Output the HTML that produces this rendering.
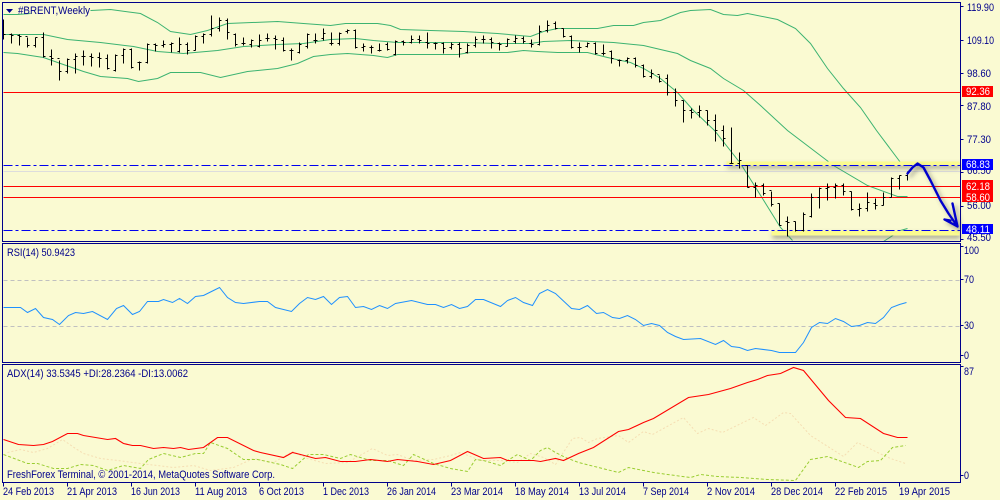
<!DOCTYPE html>
<html><head><meta charset="utf-8"><title>#BRENT,Weekly</title>
<style>
html,body{margin:0;padding:0;background:#FAFAD2;width:1000px;height:500px;overflow:hidden}
svg{display:block}
text{font-family:"Liberation Sans",sans-serif;font-size:11px;fill:#00008B}
.w{fill:#fff}
</style></head><body>
<svg width="1000" height="500" viewBox="0 0 1000 500" xmlns="http://www.w3.org/2000/svg">
<defs>
<filter id="s1" x="-5%" y="-200%" width="110%" height="800%"><feDropShadow dx="1" dy="3" stdDeviation="2.5" flood-color="#555" flood-opacity=".5"/></filter>
<filter id="s2" x="-30%" y="-30%" width="160%" height="160%"><feDropShadow dx="3" dy="3" stdDeviation="2" flood-color="#444" flood-opacity=".5"/></filter>
</defs>
<rect width="1000" height="500" fill="#FAFAD2"/>
<g transform="translate(.5 .5)" fill="none">
<path d="M3 171H960" stroke="#ddd"/>
<g stroke="#3CB371" shape-rendering="auto">
<path d="M3 14L17 14L30 13M90 10L110 9L140 13L157 22L170 31L190 34L207 30L227 23L277 21L303 23L330 25L345 23L377 23L390 25L400 29L430 30L463 31L497 33L530 36L543 31L557 28L597 28L613 25L633 25L643 22L660 20L680 12L690 10L710 9L723 14L737 15L747 13L777 19L795 28L810 43L827 68L843 88L860 107L876 130L900 162L907 164"/>
<path d="M3 34L43 34L67 39L100 42L133 46L157 51L183 53L217 50L243 46L277 44L303 43L330 39L355 38L373 40L397 42L463 42L497 43L530 43L543 41L570 40L613 42L643 45L660 49L677 53L690 60L710 68L723 78L743 90L760 105L787 130L833 165L867 185L897 196L907 196"/>
<path d="M3 52L17 53L43 57L60 63L83 71L100 76L127 78L138 81L157 78L170 72L200 72L220 77L247 71L277 68L297 63L313 56L330 54L347 53L373 55L387 57L397 54L457 54L470 52L507 52L523 50L537 51L557 52L587 52L607 57L630 62L643 68L660 78L677 92L693 110L714 130L740 163L757 190L780 227L792 240M883 241L900 230L907 228"/>
</g>
<rect x="726" y="161" width="233" height="4" fill="#FBFB90" stroke="none" filter="url(#s1)"/>
<rect x="771" y="230" width="188" height="5" fill="#FBFB90" stroke="none" filter="url(#s1)"/>
<path d="M3 92H960M3 186H960M3 197H960" stroke="#f00"/>
<path d="M3 165H960M3 230H960" stroke="#0000F0" stroke-dasharray="9 3 3 3"/>
<path shape-rendering="crispEdges" stroke="#000" d="M3 19V39M3 34h2M9 34h2M11 33V43M11 35h2M17 35h2M19 34V45M19 36h2M25 36h2M27 37V47M27 45h2M33 45h2M35 37V47M35 37h2M41 37h2M43 32V57M43 56h2M49 56h2M51 49V65M51 58h2M57 58h2M59 60V80M59 71h2M65 71h2M67 58V73M67 59h2M73 59h2M75 53V73M75 56h2M81 56h2M83 50V65M83 56h2M89 56h2M91 53V66M91 57h2M97 57h2M99 52V67M99 58h2M105 58h2M107 54V69M107 68h2M113 70h2M115 54V71M115 55h2M121 55h2M123 48V63M123 49h2M129 49h2M131 48V68M131 67h2M137 62h2M139 61V70M139 62h2M145 62h2M147 43V63M147 44h2M153 44h2M155 43V51M155 45h2M161 45h2M163 40V47M163 44h2M169 44h2M171 42V52M171 43h2M177 51h2M179 37V52M179 44h2M185 44h2M187 42V54M187 50h2M193 50h2M195 35V50M195 36h2M201 36h2M203 33V43M203 34h2M209 34h2M211 15V36M211 28h2M217 28h2M219 17V31M219 20h2M225 20h2M227 18V39M227 32h2M233 34h2M235 33V46M235 44h2M241 43h2M243 37V45M243 43h2M249 44h2M251 39V47M251 40h2M257 46h2M259 34V47M259 40h2M265 38h2M267 33V41M267 38h2M273 38h2M275 35V49M275 39h2M281 40h2M283 37V51M283 50h2M289 50h2M291 48V60M291 50h2M297 52h2M299 42V53M299 44h2M305 46h2M307 33V48M307 34h2M313 40h2M315 33V43M315 40h2M321 38h2M323 28V40M323 33h2M329 43h2M331 32V45M331 43h2M337 43h2M339 32V45M339 33h2M345 31h2M347 29V33M347 30h2M353 30h2M355 29V48M355 47h2M361 47h2M363 43V51M363 46h2M369 47h2M371 45V53M371 47h2M377 50h2M379 43V51M379 50h2M385 44h2M387 42V50M387 49h2M393 54h2M395 40V55M395 41h2M401 41h2M403 40V45M403 42h2M409 42h2M411 35V43M411 39h2M417 39h2M419 35V43M419 40h2M425 42h2M427 32V48M427 43h2M433 43h2M435 42V49M435 43h2M441 43h2M443 42V53M443 48h2M449 47h2M451 42V49M451 44h2M457 44h2M459 42V57M459 48h2M465 52h2M467 43V53M467 45h2M473 45h2M475 36V47M475 39h2M481 39h2M483 35V43M483 39h2M489 39h2M491 37V48M491 42h2M497 43h2M499 42V50M499 44h2M505 46h2M507 38V46M507 39h2M513 41h2M515 35V43M515 38h2M521 38h2M523 36V43M523 41h2M529 43h2M531 39V47M531 44h2M537 44h2M539 25V45M539 31h2M545 30h2M547 20V32M547 25h2M553 23h2M555 21V29M555 28h2M561 28h2M563 28V37M563 36h2M569 36h2M571 35V48M571 47h2M577 47h2M579 42V52M579 47h2M585 46h2M587 42V47M587 43h2M593 43h2M595 42V54M595 53h2M601 53h2M603 44V55M603 53h2M609 51h2M611 50V63M611 58h2M617 60h2M619 59V66M619 60h2M625 60h2M627 57V63M627 58h2M633 58h2M635 57V67M635 65h2M641 65h2M643 64V77M643 76h2M649 76h2M651 69V78M651 73h2M657 74h2M659 75V82M659 81h2M665 78h2M667 74V95M667 92h2M673 92h2M675 88V106M675 100h2M681 100h2M683 100V122M683 110h2M689 110h2M691 108V118M691 112h2M697 112h2M699 105V117M699 110h2M705 110h2M707 110V125M707 120h2M713 120h2M715 114V141M715 130h2M721 130h2M723 125V146M723 138h2M729 163h2M731 127V163M731 163h2M737 163h2M739 152V168M739 160h2M745 165h2M747 165V187M747 187h2M753 187h2M755 182V197M755 185h2M761 185h2M763 183V195M763 193h2M769 190h2M771 191V206M771 204h2M777 203h2M779 203V225M779 225h2M785 221h2M787 216V236M787 222h2M793 221h2M795 221V231M795 230h2M801 230h2M803 212V231M803 214h2M809 216h2M811 193V217M811 197h2M817 197h2M819 187V208M819 188h2M825 188h2M827 183V200M827 187h2M833 187h2M835 183V198M835 185h2M841 185h2M843 183V195M843 191h2M849 191h2M851 191V210M851 209h2M857 209h2M859 203V216M859 208h2M865 208h2M867 192V211M867 202h2M873 203h2M875 198V209M875 205h2M881 205h2M883 192V205M883 197h2M889 197h2M891 177V197M891 178h2M897 178h2M899 175V189M899 175h2M905 175h2M907 171V180M907 172h2"/>
<path d="M907 173L912 167L917 163L923 167L930 180L940 200L948 213L957 226M952 203L957 226L944 219L950 220" stroke="#0000CC" stroke-width="2.4" stroke-linejoin="round" stroke-linecap="round" shape-rendering="auto" filter="url(#s2)"/>
<path d="M3 280H960M3 326H960" stroke="#c0c0c0" stroke-dasharray="4 3"/>
<path shape-rendering="auto" stroke="#1E90FF" d="M3 307L20 307L27 312L35 308L43 317L52 319L59 324L68 315L75 312L83 313L92 311L107 319L116 308L123 305L132 314L139 311L147 301L158 301L163 299L172 302L179 298L187 303L195 296L203 295L211 291L219 287L227 297L235 302L243 303L259 301L267 301L275 307L291 311L299 303L307 297L315 299L323 296L331 304L339 297L347 296L355 307L363 306L371 309L379 305L387 308L395 303L411 300L427 304L435 304L443 307L451 304L459 308L467 306L475 299L483 299L500 306L507 300L515 297L523 302L532 305L539 293L547 289L555 293L571 308L579 309L587 305L596 313L603 312L612 317L619 318L627 315L635 319L643 325L651 323L659 325L667 332L675 336L683 339L700 338L715 344L723 340L731 346L739 347L747 350L755 348L771 350L779 352L795 352L803 342L811 327L819 322L827 323L835 318L843 321L851 326L859 325L867 322L875 323L883 317L891 307L899 304L906 302"/>
<path shape-rendering="auto" stroke="#F5DEB3" stroke-dasharray="2 2" d="M7 452L20 449L33 452L47 448L62 439L75 448L83 453L100 458L117 460L140 463L173 467L193 465L210 470L233 467L253 458L273 462L292 451L307 458L325 463L347 462L372 448L387 455L397 454L413 460L433 459L450 455L460 452L480 460L500 460L517 462L530 453L543 457L555 464L572 438L580 437L588 442L597 438L618 435L628 442L643 431L652 434L683 417L697 433L708 428L722 432L753 417L765 425L783 412L790 413L810 435L843 456L857 442L877 452L890 458L905 463"/>
<path shape-rendering="auto" stroke="#9ACD32" stroke-dasharray="3 2" d="M3 454L27 463L37 463L53 468L67 468L80 464L93 465L107 470L123 465L140 468L148 459L163 453L180 457L195 453L203 453L210 442L227 448L243 459L257 459L280 464L292 468L308 454L323 454L340 458L350 454L370 460L387 460L403 465L413 454L433 463L450 468L467 471L475 459L483 460L500 465L507 460L517 454L530 460L540 450L547 447L555 452L565 457L578 462L590 465L618 472L628 467L653 472L667 474L690 477L700 474L717 476L740 477L767 479L795 480L810 459L827 456L847 463L858 467L867 461L880 460L892 447L905 445"/>
<path shape-rendering="auto" stroke="#f00" stroke-width="1.1" d="M3 439L18 444L33 445L43 444L52 441L67 433L77 433L83 435L107 439L115 438L123 443L132 445L140 445L153 448L163 447L173 448L180 447L188 449L203 447L217 437L227 437L253 450L260 452L283 457L292 452L300 454L315 458L325 457L340 461L355 461L370 459L387 461L397 459L417 461L433 464L450 460L467 451L483 458L500 457L507 460L533 460L540 461L555 458L563 460L578 453L593 447L618 431L628 429L643 422L653 418L688 397L708 394L730 388L747 382L757 379L767 375L780 373L793 367L803 370L828 400L845 417L860 418L883 433L897 437L907 437"/>
<g stroke="#00008B" shape-rendering="crispEdges">
<rect x="2" y="2" width="958" height="239"/>
<rect x="2" y="243" width="958" height="119"/>
<rect x="2" y="364" width="958" height="118"/>
<path d="M960 6h3M960 40h3M960 73h3M960 105h3M960 139h3M960 172h3M960 206h3M960 239h3M960 246h3M960 279h3M960 325h3M960 355h3M960 366h3M960 475h3"/>
<path d="M3 482v4M67 482v4M131 482v4M195 482v4M259 482v4M323 482v4M387 482v4M451 482v4M515 482v4M579 482v4M643 482v4M707 482v4M771 482v4M835 482v4M899 482v4"/>
</g>
</g>
<path d="M6 9H13L9.5 13Z" fill="#00008B"/>
<text x="18" y="14" textLength="72" lengthAdjust="spacingAndGlyphs">#BRENT,Weekly</text>
<text x="7" y="256" textLength="68" lengthAdjust="spacingAndGlyphs">RSI(14) 50.9423</text>
<text x="7" y="377" textLength="181" lengthAdjust="spacingAndGlyphs">ADX(14) 33.5345 +DI:28.2364 -DI:13.0062</text>
<text x="7" y="478" textLength="268" lengthAdjust="spacingAndGlyphs">FreshForex Terminal, © 2001-2014, MetaQuotes Software Corp.</text>
<g>
<text x="967" y="11" textLength="27" lengthAdjust="spacingAndGlyphs">119.90</text>
<text x="967" y="44" textLength="27" lengthAdjust="spacingAndGlyphs">109.10</text>
<text x="967" y="77" textLength="24" lengthAdjust="spacingAndGlyphs">98.60</text>
<text x="967" y="110" textLength="24" lengthAdjust="spacingAndGlyphs">87.80</text>
<text x="967" y="143" textLength="24" lengthAdjust="spacingAndGlyphs">77.30</text>
<text x="967" y="174" textLength="24" lengthAdjust="spacingAndGlyphs">66.50</text>
<text x="967" y="209" textLength="24" lengthAdjust="spacingAndGlyphs">56.00</text>
<text x="967" y="241" textLength="24" lengthAdjust="spacingAndGlyphs">45.50</text>
<rect x="962" y="86" width="31" height="11" fill="#f00"/>
<text class="w" x="966" y="95" textLength="24" lengthAdjust="spacingAndGlyphs">92.36</text>
<rect x="962" y="159" width="31" height="11" fill="#00f"/>
<text class="w" x="966" y="168" textLength="24" lengthAdjust="spacingAndGlyphs">68.83</text>
<rect x="962" y="180" width="31" height="22" fill="#f00"/>
<text class="w" x="966" y="190" textLength="24" lengthAdjust="spacingAndGlyphs">62.18</text>
<text class="w" x="966" y="201" textLength="24" lengthAdjust="spacingAndGlyphs">58.60</text>
<rect x="962" y="224" width="31" height="10" fill="#00f"/>
<text class="w" x="966" y="233" textLength="24" lengthAdjust="spacingAndGlyphs">48.11</text>
<text x="964" y="254" textLength="15" lengthAdjust="spacingAndGlyphs">100</text>
<text x="964" y="283" textLength="10" lengthAdjust="spacingAndGlyphs">70</text>
<text x="964" y="329" textLength="10" lengthAdjust="spacingAndGlyphs">30</text>
<text x="964" y="359" textLength="5" lengthAdjust="spacingAndGlyphs">0</text>
<text x="964" y="375" textLength="10" lengthAdjust="spacingAndGlyphs">87</text>
<text x="964" y="479" textLength="5" lengthAdjust="spacingAndGlyphs">0</text>
</g>
<g>
<text x="3" y="495" textLength="51" lengthAdjust="spacingAndGlyphs">24 Feb 2013</text>
<text x="67" y="495" textLength="50" lengthAdjust="spacingAndGlyphs">21 Apr 2013</text>
<text x="131" y="495" textLength="49" lengthAdjust="spacingAndGlyphs">16 Jun 2013</text>
<text x="195" y="495" textLength="52" lengthAdjust="spacingAndGlyphs">11 Aug 2013</text>
<text x="259" y="495" textLength="45" lengthAdjust="spacingAndGlyphs">6 Oct 2013</text>
<text x="323" y="495" textLength="46" lengthAdjust="spacingAndGlyphs">1 Dec 2013</text>
<text x="387" y="495" textLength="49" lengthAdjust="spacingAndGlyphs">26 Jan 2014</text>
<text x="451" y="495" textLength="52" lengthAdjust="spacingAndGlyphs">23 Mar 2014</text>
<text x="515" y="495" textLength="54" lengthAdjust="spacingAndGlyphs">18 May 2014</text>
<text x="579" y="495" textLength="47" lengthAdjust="spacingAndGlyphs">13 Jul 2014</text>
<text x="643" y="495" textLength="46" lengthAdjust="spacingAndGlyphs">7 Sep 2014</text>
<text x="707" y="495" textLength="48" lengthAdjust="spacingAndGlyphs">2 Nov 2014</text>
<text x="771" y="495" textLength="52" lengthAdjust="spacingAndGlyphs">28 Dec 2014</text>
<text x="835" y="495" textLength="52" lengthAdjust="spacingAndGlyphs">22 Feb 2015</text>
<text x="899" y="495" textLength="51" lengthAdjust="spacingAndGlyphs">19 Apr 2015</text>
</g>
</svg>
</body></html>
